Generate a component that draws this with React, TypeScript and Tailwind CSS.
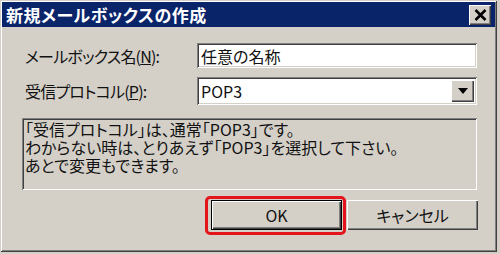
const font = "[font-family:'Noto_Sans_CJK_JP','Noto_Sans',sans-serif] [font-feature-settings:'palt']";

const sunken =
  "shadow-[inset_1px_1px_0_#808080,inset_-1px_-1px_0_#ffffff,inset_2px_2px_0_#404040,inset_-2px_-2px_0_#d4d0c8]";
const raised =
  "shadow-[inset_1px_1px_0_#ffffff,inset_-1px_-1px_0_#404040,inset_-2px_-2px_0_#808080]";

const CloseIcon = () => (
  <svg width="13" height="12" viewBox="0 0 13 12">
    <path d="M1.5 1 L11.5 11 M11.5 1 L1.5 11" stroke="#000" strokeWidth="2.6" />
  </svg>
);

const DownArrow = () => (
  <svg width="10" height="6" viewBox="0 0 10 6">
    <path d="M0 0 H10 L5 6 Z" fill="#000" />
  </svg>
);

const App = () => {
  return (
    <div className={`w-[500px] h-[254px] bg-[#d4d0c8] overflow-hidden ${font}`}>
      <div className="w-[497px] h-[252px] p-[2px] shadow-[inset_1px_1px_0_#d4d0c8,inset_-1px_-1px_0_#404040,inset_2px_2px_0_#ffffff,inset_-2px_-2px_0_#808080]">
        <div className="h-[25px] bg-[#0a246a] flex items-center justify-between pl-[4px] pr-[4px]">
          <span className="text-white font-bold text-[17px] leading-none tracking-[0.5px]">
            新規メールボックスの作成
          </span>
          <button className={`w-[22px] h-[20px] bg-[#d4d0c8] flex items-center justify-center ${raised}`}>
            <CloseIcon />
          </button>
        </div>

        <div className="pl-[20px] pt-[16px] text-[16px] text-[#111]">
          <div className="flex items-center h-[25px]">
            <label className="w-[175px] pl-[3px] leading-none tracking-[-0.8px]">
              メールボックス名(<span className="underline">N</span>):
            </label>
            <div className={`w-[280px] h-[25px] bg-white flex items-center pl-[4px] ${sunken}`}>
              <span className="leading-none">任意の名称</span>
            </div>
          </div>

          <div className="flex items-center h-[28px] mt-[9px]">
            <label className="w-[175px] pl-[3px] leading-none tracking-[-0.8px]">
              受信プロトコル(<span className="underline">P</span>):
            </label>
            <div className={`w-[280px] h-[28px] bg-white flex items-center justify-between pl-[4px] pr-[3px] ${sunken}`}>
              <span className="leading-none">POP3</span>
              <div className={`w-[23px] h-[22px] bg-[#d4d0c8] flex items-center justify-center ${raised}`}>
                <DownArrow />
              </div>
            </div>
          </div>

          <div className={`w-[455px] h-[72px] mt-[13px] pl-[3px] pt-[2px] leading-[18px] ${sunken}`}>
            <p>「受信プロトコル」は、通常「POP3」です。</p>
            <p>わからない時は、とりあえず「POP3」を選択して下さい。</p>
            <p>あとで変更もできます。</p>
          </div>

          <div className="flex justify-end gap-[5px] mt-[10px] w-[456px]">
            <div className="relative">
              <button className={`w-[131px] h-[30px] bg-[#d4d0c8] border border-black text-[16px] leading-none ${raised}`}>
                OK
              </button>
              <div className="absolute -left-[6px] -top-[4px] w-[141px] h-[39px] border-[3px] border-[#e3141b] rounded-[5px]" />
            </div>
            <button className={`w-[131px] h-[30px] bg-[#d4d0c8] text-[16px] leading-none ${raised}`}>
              キャンセル
            </button>
          </div>
        </div>
      </div>
    </div>
  );
};

export default App;
